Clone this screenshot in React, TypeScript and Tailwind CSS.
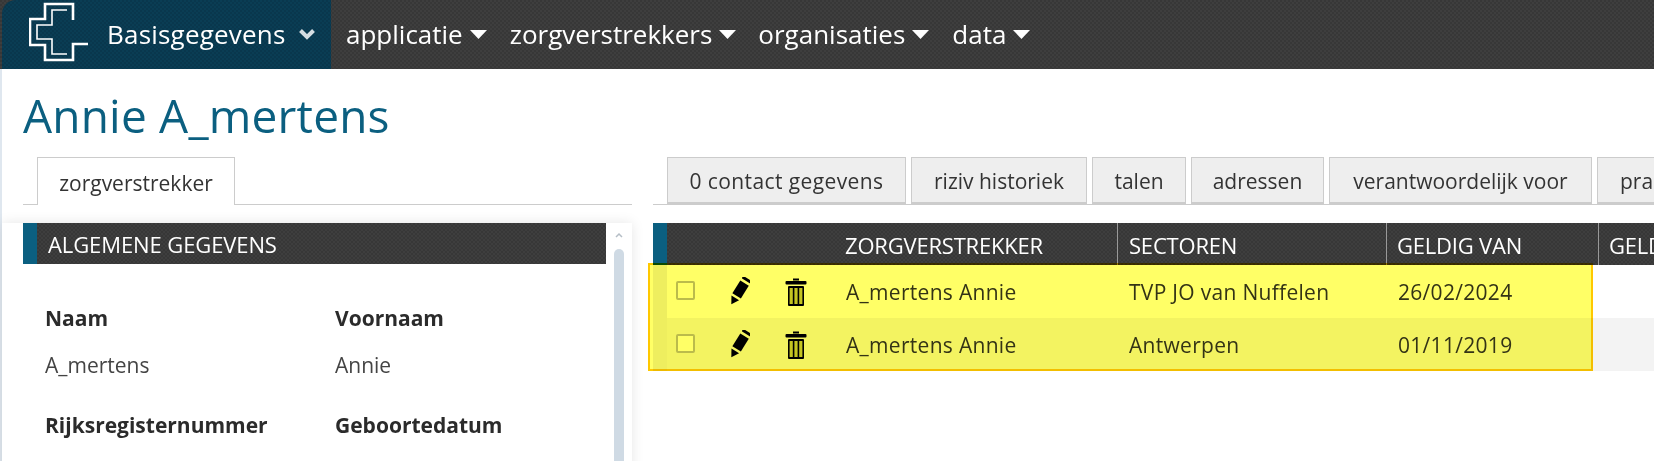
import React from "react";

const pattern =
  "bg-[#3a3a3a] bg-[repeating-conic-gradient(#3e3e3e_0%_25%,#373737_0%_50%)] bg-[length:4px_4px]";
const cols = "grid grid-cols-[14px_168px_282px_269px_212px_300px]";

const rightTabs = [
  { label: "0 contact gegevens", width: "w-[239px] tracking-[0.4px]" },
  { label: "riziv historiek", width: "w-[176px]" },
  { label: "talen", width: "w-[94px]" },
  { label: "adressen", width: "w-[133px]" },
  { label: "verantwoordelijk voor", width: "w-[263px]" },
  { label: "praktijken", width: "w-[150px] justify-start pl-[22px]" },
];
const rows = [
  { sector: "TVP JO van Nuffelen", date: "26/02/2024", bg: "bg-white" },
  { sector: "Antwerpen", date: "01/11/2019", bg: "bg-[#f3f3f3]" },
];

function Logo() {
  return (
    <svg width="60" height="62" viewBox="0 0 60 62" fill="none" stroke="#fff" className="-mt-[3px] shrink-0">
      <path d="M44 18 V2 H16 V17 H1 V43 H16 V58 H44 V42 H59" strokeWidth="2.6" />
      <path d="M38 8 H23 V23 H8 V37 H23 V52 H38" strokeWidth="1.6" />
    </svg>
  );
}

function Caret() {
  return (
    <svg width="17" height="9" viewBox="0 0 17 9" className="ml-[7px] shrink-0">
      <path d="M0 0 H17 L8.5 9 Z" fill="#fff" />
    </svg>
  );
}

function Pencil() {
  return (
    <svg width="22" height="30" viewBox="0 0 22 30" className="shrink-0">
      <g transform="rotate(32 11 15)">
        <rect x="6" y="-1" width="10" height="3" rx="1" fill="#000" />
        <rect x="6" y="4.5" width="10" height="15" fill="#000" />
        <path d="M6.5 22 H15.5 L11 29.5 Z" fill="#000" />
      </g>
    </svg>
  );
}

function Trash() {
  return (
    <svg width="22" height="30" viewBox="0 0 22 30" className="shrink-0">
      <path d="M8 2.5 H14" stroke="#000" strokeWidth="2" />
      <rect x="0.5" y="4" width="21" height="3.5" rx="1" fill="#000" />
      <rect x="3" y="9" width="16" height="20" rx="1" fill="#000" />
      <path d="M4.6 11 H7.8 V27 H4.6 Z M9.4 11 H12.6 V27 H9.4 Z M14.2 11 H17.4 V27 H14.2 Z" fill="#c4c452" />
    </svg>
  );
}

function Field({ label, value }: { label: string; value?: string }) {
  return (
    <div>
      <div className="h-[30px] text-[21px] leading-[30px] font-bold text-[#2b2b2b]">{label}</div>
      {value && <div className="mt-[17px] h-[30px] text-[21px] leading-[30px] text-[#444]">{value}</div>}
    </div>
  );
}

export default function App() {
  return (
    <div className="flex h-[461px] w-[1654px] flex-col overflow-hidden bg-white font-['Open_Sans',sans-serif]">
      <nav className={`flex h-[69px] shrink-0 items-center text-[26px] text-white ${pattern}`}>
        <div className="ml-[2px] flex h-full w-[329px] items-center rounded-tl-[14px] bg-[#0a3a52] bg-[repeating-conic-gradient(#0a3d54_0%_25%,#09374d_0%_50%)] bg-[length:4px_4px] pl-[27px]">
          <Logo />
          <span className="ml-[18px] tracking-[0.2px]">Basisgegevens</span>
          <svg width="18" height="13" viewBox="0 0 18 13" className="ml-[12px]">
            <path d="M2.5 2.5 L9 9 L15.5 2.5" fill="none" stroke="#d5dde2" strokeWidth="4" />
          </svg>
        </div>
        <div className="ml-[15px] flex items-center">
          <span>applicatie</span>
          <Caret />
        </div>
        <div className="ml-[23px] flex items-center">
          <span>zorgverstrekkers</span>
          <Caret />
        </div>
        <div className="ml-[22px] flex items-center">
          <span>organisaties</span>
          <Caret />
        </div>
        <div className="ml-[23px] flex items-center">
          <span>data</span>
          <Caret />
        </div>
      </nav>

      <main className="flex min-h-0 flex-1 flex-col border-l-2 border-[#dfe7ef]">
        <h1 className="h-[88px] shrink-0 pl-[21px] pt-[15px] text-[46px] leading-[62px] tracking-[0.2px] text-[#0b5f80]">
          Annie A_mertens
        </h1>

        <div className="flex min-h-0 flex-1">
          <section className="w-[630px] shrink-0">
            <div className="ml-[21px] flex h-[48px] items-end border-b border-[#ccc] pl-[14px]">
              <div className="-mb-px flex h-[48px] w-[198px] items-center justify-center border border-b-0 border-[#ccc] bg-white pt-[4px] text-[21px] text-[#333]">
                zorgverstrekker
              </div>
            </div>
            <div className="mt-[18px] flex h-[300px] bg-white pl-[21px] shadow-[0_0_12px_rgba(0,0,0,0.1)]">
              <div className="w-[583px] shrink-0">
                <div className={`flex h-[41px] items-center border-l-[14px] border-[#0b5f80] pl-[11px] pt-[2px] text-[22px] tracking-[-0.1px] text-white ${pattern}`}>
                  ALGEMENE GEGEVENS
                </div>
                <div className="grid grid-cols-[290px_1fr] gap-y-[30px] pl-[22px] pt-[39px]">
                  <Field label="Naam" value="A_mertens" />
                  <Field label="Voornaam" value="Annie" />
                  <Field label="Rijksregisternummer" />
                  <Field label="Geboortedatum" />
                </div>
              </div>
              <div className="ml-[8px] flex w-[10px] flex-col items-center">
                <svg width="8" height="6" viewBox="0 0 8 6" className="mt-[9px]">
                  <path d="M1 5 L4 2 L7 5" fill="none" stroke="#b5bec6" strokeWidth="1.5" />
                </svg>
                <div className="mt-[11px] w-[10px] flex-1 rounded-t-[5px] bg-[#cfdae4]" />
              </div>
            </div>
          </section>

          <section className="relative ml-[21px] min-w-0 flex-1">
            <div className="flex h-[48px] items-end gap-[5px] overflow-hidden border-b border-[#ccc] pl-[14px]">
              {rightTabs.map((t) => (
                <div
                  key={t.label}
                  className={`flex h-[47px] shrink-0 items-center justify-center whitespace-nowrap border border-b-2 border-[#ccc] bg-[#eee] pt-[4px] text-[21px] text-[#333] ${t.width}`}
                >
                  {t.label}
                </div>
              ))}
            </div>

            <div className="mt-[18px] w-[1001px]">
              <div className={`${cols} h-[42px] text-[22px] tracking-[-0.2px] text-white ${pattern}`}>
                <div className="bg-[#0b5f80]" />
                <div />
                <div className="flex items-center pl-[10px] pt-[2px]">ZORGVERSTREKKER</div>
                <div className="flex items-center border-l border-[#999] pl-[11px] pt-[2px]">SECTOREN</div>
                <div className="flex items-center border-l border-[#999] pl-[10px] pt-[2px]">GELDIG VAN</div>
                <div className="flex items-center border-l border-[#999] pl-[10px] pt-[2px]">GELDIG TOT</div>
              </div>
              {rows.map((r, i) => (
                <div key={i} className={`${cols} h-[53px] text-[21px] tracking-[0.3px] text-[#333] ${r.bg}`}>
                  <div className="bg-[#eee]" />
                  <div className="flex items-center pl-[9px]">
                    <div className="-mt-[2px] size-[19px] rounded-[2px] border-2 border-[#bbb] bg-white" />
                    <div className="ml-[33px]">
                      <Pencil />
                    </div>
                    <div className="ml-[35px]">
                      <Trash />
                    </div>
                  </div>
                  <div className="flex items-center pl-[11px] pt-[2px]">A_mertens Annie</div>
                  <div className="flex items-center pl-[12px] pt-[2px]">{r.sector}</div>
                  <div className="flex items-center pl-[12px] pt-[2px]">{r.date}</div>
                  <div />
                </div>
              ))}
            </div>

            {/* highlight marker over the two rows */}
            <div className="absolute left-[-5px] top-[106px] h-[108px] w-[945px] border-2 border-[#ffc800] bg-[#ffff66] mix-blend-multiply" />
          </section>
        </div>
      </main>
    </div>
  );
}
